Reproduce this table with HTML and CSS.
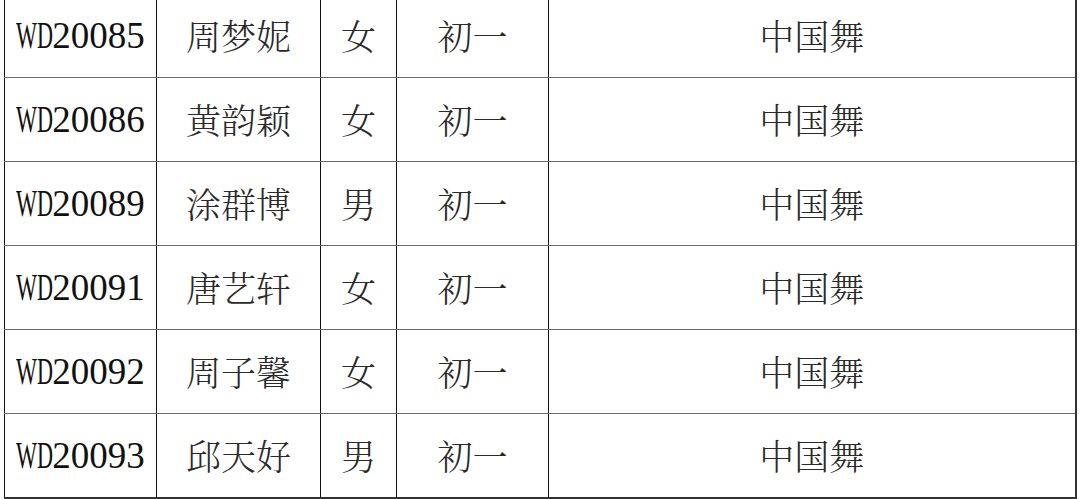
FILE: index.html
```html
<!DOCTYPE html>
<html lang="zh">
<head>
<meta charset="utf-8">
<link rel="stylesheet" href="styles.css">
</head>
<body>
<table class="roster">
  <colgroup>
    <col class="c-id"><col class="c-name"><col class="c-sex"><col class="c-grade"><col class="c-dance">
  </colgroup>
  <tbody>
    <tr><td class="id"><span class="pre">WD</span>20085</td><td>周梦妮</td><td>女</td><td>初一</td><td>中国舞</td></tr>
    <tr><td class="id"><span class="pre">WD</span>20086</td><td>黄韵颖</td><td>女</td><td>初一</td><td>中国舞</td></tr>
    <tr><td class="id"><span class="pre">WD</span>20089</td><td>涂群博</td><td>男</td><td>初一</td><td>中国舞</td></tr>
    <tr><td class="id"><span class="pre">WD</span>20091</td><td>唐艺轩</td><td>女</td><td>初一</td><td>中国舞</td></tr>
    <tr><td class="id"><span class="pre">WD</span>20092</td><td>周子馨</td><td>女</td><td>初一</td><td>中国舞</td></tr>
    <tr><td class="id"><span class="pre">WD</span>20093</td><td>邱天好</td><td>男</td><td>初一</td><td>中国舞</td></tr>
  </tbody>
</table>
</body>
</html>
```

FILE: styles.css
```css
html, body {
  margin: 0;
  padding: 0;
  background: #fff;
  overflow: hidden;
}

.roster {
  border-collapse: collapse;
  table-layout: fixed;
  margin: -7px 0 0 4px;
  width: 1071px;
  color: #2a2a2a;
  font-family: "Noto Serif CJK SC", "AR PL UMing CN", "Noto Sans CJK SC", serif;
  font-size: 35px;
  font-weight: 300;
}

.c-id { width: 152px; }
.c-name { width: 164px; }
.c-sex { width: 76px; }
.c-grade { width: 152px; }
.c-dance { width: 527px; }

.roster td {
  height: 83px;
  padding: 0;
  text-align: center;
  vertical-align: middle;
  border-top: 1px solid #6a6a6a;
  border-bottom: 1px solid #6a6a6a;
  border-left: 1px solid #111;
  border-right: 1px solid #111;
  line-height: 1;
}

.roster tr:last-child td {
  border-bottom: 2px solid #333;
}

.roster td:last-child {
  border-right: 2px solid #333;
}

.roster td.id {
  font-family: "Liberation Serif", serif;
  font-size: 37px;
  font-weight: 400;
  color: #111;
  white-space: nowrap;
}

.roster td.id .pre {
  display: inline-block;
  width: 36px;
  transform: scaleX(0.6);
  transform-origin: left center;
  white-space: nowrap;
}
```
